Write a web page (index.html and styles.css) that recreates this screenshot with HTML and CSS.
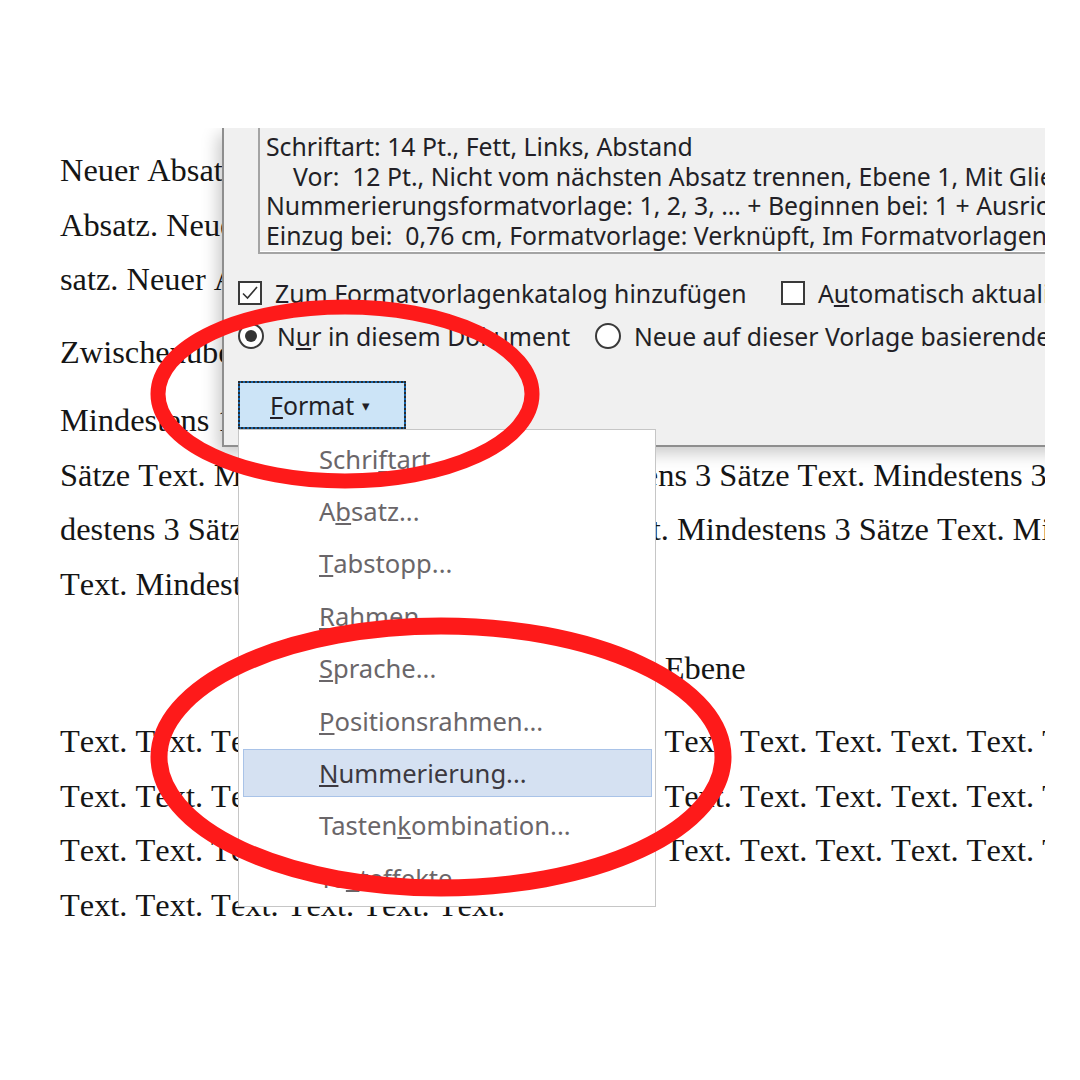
FILE: index.html
```html
<!DOCTYPE html>
<html lang="de">
<head>
  <meta charset="UTF-8" />
  <title>Formatvorlage – Format-Menü</title>
  <link rel="stylesheet" href="styles.css">
</head>
<body>
  <div class="shot">
    <div class="doc">
      <div class="line">Neuer Absatz. Neuer Absatz. Neuer Absatz. Neuer Absatz. Neuer Ab-</div>
      <div class="line">Absatz. Neuer Absatz. Neuer Absatz. Neuer Absatz. Neuer Ab-</div>
      <div class="line">satz. Neuer Absatz.</div>
      <div class="line head1">Zwischenüberschrift 1. Ebene</div>
      <div class="line">Mindestens 1 Absatz. Mindestens 3 Sätze Text. Mindestens 3</div>
      <div class="line">Sätze Text. Mindestens 3 Sätze Test Mindestens 3 Sätze Text. Mindestens 3</div>
      <div class="line">destens 3 Sätze Text. Mindestens 3 Sätze Text. Mindestens 3 Sätze Text. Mindestens 3</div>
      <div class="line">Text. Mindestens 3 Sätze Text.</div>
      <div class="line head2">Zwischenüberschrift 2. Ebene</div>
      <div class="line">Text. Text. Text. Text. Text. Text. Text. Text. Text. Text. Text. Text. Text. Text.</div>
      <div class="line">Text. Text. Text. Text. Text. Text. Text. Text. Text. Text. Text. Text. Text. Text.</div>
      <div class="line">Text. Text. Text. Text. Text. Text. Text. Text. Text. Text. Text. Text. Text. Text.</div>
      <div class="line">Text. Text. Text. Text. Text. Text.</div>
    </div>

    <div class="dialog">
      <div class="desc">
        <div>Schriftart: 14 Pt., Fett, Links, Abstand</div>
        <div class="indent">Vor:&nbsp; 12 Pt., Nicht vom nächsten Absatz trennen, Ebene 1, Mit Gliederung</div>
        <div>Nummerierungsformatvorlage: 1, 2, 3, … + Beginnen bei: 1 + Ausrichtung: Links</div>
        <div>Einzug bei:&nbsp; 0,76 cm, Formatvorlage: Verknüpft, Im Formatvorlagenkatalog anzeigen</div>
      </div>

      <div class="row checks">
        <label class="opt">
          <span class="box">
            <svg width="20" height="20" viewBox="0 0 20 20"><path d="M3 10.5 L7.5 15 L17 4" fill="none" stroke="#333" stroke-width="1.6"/></svg>
          </span>
          <span>Zum Formatvorlagenkatalog hinzufügen</span>
        </label>
        <label class="opt">
          <span class="box"></span>
          <span>A<u>u</u>tomatisch aktualisieren</span>
        </label>
      </div>

      <div class="row radios">
        <label class="opt">
          <span class="radio on"></span>
          <span>N<u>u</u>r in diesem Dokument</span>
        </label>
        <label class="opt">
          <span class="radio"></span>
          <span>Neue auf dieser Vorlage basierende Dokumente</span>
        </label>
      </div>

      <button class="format"><span><u>F</u>ormat</span><span class="caret">▾</span></button>
    </div>

    <div class="menu">
      <div class="item">Schri<u>f</u>tart...</div>
      <div class="item">A<u>b</u>satz...</div>
      <div class="item"><u>T</u>abstopp...</div>
      <div class="item"><u>R</u>ahmen...</div>
      <div class="item"><u>S</u>prache...</div>
      <div class="item"><u>P</u>ositionsrahmen...</div>
      <div class="item active"><u>N</u>ummerierung...</div>
      <div class="item">Tasten<u>k</u>ombination...</div>
      <div class="item">Te<u>x</u>teffekte...</div>
    </div>

    <svg class="marks" width="1080" height="1080" viewBox="0 0 1080 1080">
      <ellipse cx="345" cy="394" rx="187" ry="87" fill="none" stroke="#fe1a1a" stroke-width="15"/>
      <ellipse cx="441" cy="757" rx="282" ry="131" fill="none" stroke="#fe1a1a" stroke-width="17"/>
    </svg>
  </div>
</body>
</html>
```

FILE: styles.css
```css
body { margin: 0; background: #fff; }

.shot {
  position: relative; width: 1045px; height: 1080px; overflow: hidden;
}

/* Word-Dokument im Hintergrund */
.doc {
  padding: 143px 0 0 60px;
  font-family: "Liberation Serif", "Times New Roman", serif;
  font-size: 32.4px; line-height: 54.5px; color: #151515;
  font-kerning: none;
}
.line { white-space: nowrap; }
.head1 { margin-top: 18.5px; margin-bottom: 13.5px; }
.head2 { margin-top: 30px; margin-bottom: 18.5px; padding-left: 298px; }

/* Dialog "Neue Formatvorlage" (Ausschnitt) */
.dialog {
  position: absolute; left: 222px; top: 128px;
  width: 900px; height: 319px; box-sizing: border-box;
  background: #f0f0f0;
  border-left: 2px solid #8e8e8e; border-bottom: 2px solid #8e8e8e;
  box-shadow: -4px 6px 16px rgba(0, 0, 0, 0.22);
  clip-path: inset(0 -40px -40px -40px);
  padding-left: 14px;
  font-family: "Noto Sans", "Open Sans", sans-serif; font-size: 24.8px; color: #221f26;
}
.desc {
  margin-left: 20px; padding: 4px 0 1px 6px;
  border-left: 2px solid #a4a4a4; border-bottom: 2px solid #a4a4a4;
  box-shadow: inset 0 -1px 0 #fff;
  line-height: 29.7px; white-space: nowrap;
}
.desc .indent { padding-left: 27px; }

.row { display: flex; align-items: center; height: 30px; white-space: nowrap; }
.checks { margin-top: 24px; }
.radios { margin-top: 13px; }
.checks .opt:first-child { width: 543px; }
.radios .opt:first-child { width: 357px; }
.opt { display: flex; align-items: center; gap: 13px; flex: none; }

.box {
  width: 20px; height: 20px; border: 2px solid #3a3a3a; background: #fff;
  display: flex; align-items: center; justify-content: center;
}
.radio {
  width: 22px; height: 22px; border: 2px solid #3a3a3a; border-radius: 50%;
  background: #fff; display: flex; align-items: center; justify-content: center;
}
.radio.on::after {
  content: ""; width: 12px; height: 12px; border-radius: 50%; background: #333;
}

.format {
  margin-top: 30px; width: 168px; height: 48px;
  display: flex; align-items: center; gap: 8px; padding: 0 0 0 30px;
  background: #cce4f7; color: #221f26;
  border: 2px solid #1565ad; outline: 2px dotted #2b2b2b; outline-offset: -2px;
  font-family: inherit; font-size: 24.8px;
}
.caret { font-size: 15px; }

/* Aufgeklapptes Menü */
.menu {
  position: absolute; left: 238px; top: 429px;
  width: 418px; height: 478px; box-sizing: border-box;
  padding: 3px 0 0; display: flex; flex-direction: column;
  background: #fff; border: 1px solid #c6c6c6;
  font-family: "Noto Sans", "Open Sans", sans-serif; font-size: 25.6px; color: #6a6669;
}
.item {
  height: 48px; margin: 2.2px 3px 2.2px 4px; padding-left: 75px; flex: none;
  display: flex; align-items: center; box-sizing: border-box;
  border: 1px solid transparent;
}
.item.active { background: #d5e1f2; border-color: #a9c3e8; color: #3c3940; }

.marks { position: absolute; left: 0; top: 0; pointer-events: none; }
```
